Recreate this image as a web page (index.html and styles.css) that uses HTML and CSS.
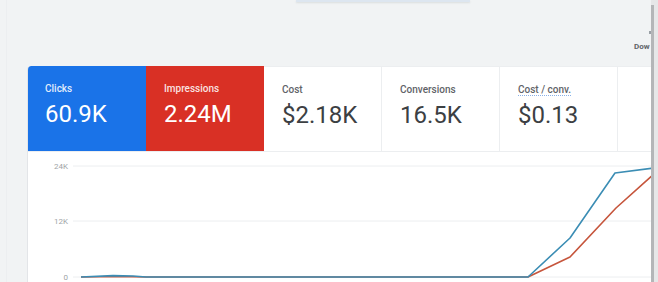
FILE: index.html
```html
<!DOCTYPE html>
<html lang="en">
<head>
  <meta charset="UTF-8">
  <title>Campaign Overview</title>
  <link rel="stylesheet" href="styles.css">
</head>
<body>
  <div class="page">
    <div class="main">
      <!-- Tab strip edge above the viewport -->
      <div class="top-tab"></div>

      <!-- Toolbar -->
      <div class="toolbar">
        <div class="download">
          <span class="download-icon"></span>
          <span class="download-label">Dow</span>
        </div>
      </div>

      <!-- Performance card -->
      <section class="card">
        <div class="tiles">
          <div class="tile tile-blue">
            <div class="tile-label">Clicks</div>
            <div class="tile-value">60.9K</div>
          </div>
          <div class="tile tile-red">
            <div class="tile-label">Impressions</div>
            <div class="tile-value">2.24M</div>
          </div>
          <div class="tile">
            <div class="tile-label">Cost</div>
            <div class="tile-value">$2.18K</div>
          </div>
          <div class="tile">
            <div class="tile-label">Conversions</div>
            <div class="tile-value">16.5K</div>
          </div>
          <div class="tile">
            <div class="tile-label dotted">Cost / conv.</div>
            <div class="tile-value">$0.13</div>
          </div>
          <div class="tile tile-empty"></div>
        </div>

        <div class="chart">
          <svg width="640" height="130" viewBox="0 0 640 130">
            <g class="grid">
              <line x1="45" y1="14" x2="640" y2="14"></line>
              <line x1="45" y1="69" x2="640" y2="69"></line>
              <line x1="45" y1="125" x2="640" y2="125"></line>
            </g>
            <g class="axis">
              <text x="40" y="17">24K</text>
              <text x="40" y="72">12K</text>
              <text x="40" y="128">0</text>
            </g>
            <polyline class="line-red" points="53,125 90,124.5 118,125 500,125 542,105 588,56 626,22 640,10"></polyline>
            <polyline class="line-blue" points="53,125 85,123.6 105,124 118,125 500,125 542,86 587,21 626,16 640,14"></polyline>
          </svg>
        </div>
      </section>
    </div>

    <!-- Scrollbar -->
    <div class="scrollbar">
      <div class="scroll-thumb"></div>
    </div>
  </div>
</body>
</html>
```

FILE: styles.css
```css
/* General Reset */
* {
  margin: 0;
  padding: 0;
  box-sizing: border-box;
}

body {
  font-family: Roboto, 'Liberation Sans', Arial, sans-serif;
  background-color: #f1f3f4;
  color: #3c4043;
  overflow: hidden;
}

.page {
  display: flex;
  height: 282px;
}

/* Main */
.main {
  width: 651px;
  overflow: hidden;
  border-left: 1px solid #eceef0;
  margin-left: 6px;
}

.top-tab {
  margin-left: 289px;
  width: 174px;
  height: 2px;
  background-color: #dde6f0;
  box-shadow: 0 1px 2px rgba(60, 64, 67, 0.12);
}

/* Toolbar */
.toolbar {
  display: flex;
  justify-content: flex-end;
  height: 64px;
}

.download {
  width: 17px;
  display: flex;
  flex-direction: column;
  align-items: flex-start;
  padding-top: 29px;
}

.download-icon {
  display: block;
  width: 2px;
  height: 3px;
  margin-left: 15px;
  background-color: #9aa0a6;
}

.download-label {
  display: block;
  margin-top: 8px;
  font-size: 8px;
  line-height: 9px;
  font-weight: 700;
  color: #5f6368;
  white-space: nowrap;
}

/* Card */
.card {
  margin-left: 20px;
  width: 640px;
  height: 216px;
  background-color: #ffffff;
  border-top-left-radius: 4px;
  border-left: 1px solid #e3e5e8;
  overflow: hidden;
}

.tiles {
  display: grid;
  grid-template-columns: repeat(5, 118px) 1fr;
  height: 86px;
  border-bottom: 1px solid #eceef0;
}

.tile {
  display: flex;
  flex-direction: column;
  align-items: flex-start;
  padding: 17px 0 0 18px;
  border-right: 1px solid #eceef0;
  border-top: 1px solid #eceef0;
}

.tile-empty {
  border-right: none;
}

.tile-label {
  height: 12px;
  font-size: 10px;
  line-height: 12px;
  font-weight: 500;
  color: #5f6368;
  white-space: nowrap;
}

.tile-label.dotted {
  background-image: linear-gradient(to right, #8ab0e6 50%, transparent 50%);
  background-size: 2px 1px;
  background-repeat: repeat-x;
  background-position: 0 11px;
}

.tile-value {
  margin-top: 5px;
  font-size: 24px;
  line-height: 28px;
  color: #3c4043;
  white-space: nowrap;
}

.tile-blue {
  background-color: #1a73e8;
  border: none;
  margin-left: -1px;
  border-top-left-radius: 4px;
}

.tile-red {
  background-color: #d93025;
  border: none;
}

.tile-blue .tile-label,
.tile-red .tile-label {
  color: rgba(255, 255, 255, 0.88);
}

.tile-blue .tile-value,
.tile-red .tile-value {
  color: #ffffff;
}

/* Chart */
.chart svg {
  display: block;
}

.grid line {
  stroke: #eceef0;
  stroke-width: 1;
}

.axis text {
  font-size: 8px;
  fill: #a0a4a8;
  text-anchor: end;
}

.line-blue,
.line-red {
  fill: none;
  stroke-width: 1.6;
  stroke-linejoin: round;
}

.line-blue {
  stroke: #3b8db4;
}

.line-red {
  stroke: #c6553c;
}

/* Scrollbar */
.scrollbar {
  width: 7px;
  background-color: #e6e7e8;
  padding-top: 5px;
}

.scroll-thumb {
  width: 3px;
  height: 100%;
  background-color: #b4b6b8;
}
```
